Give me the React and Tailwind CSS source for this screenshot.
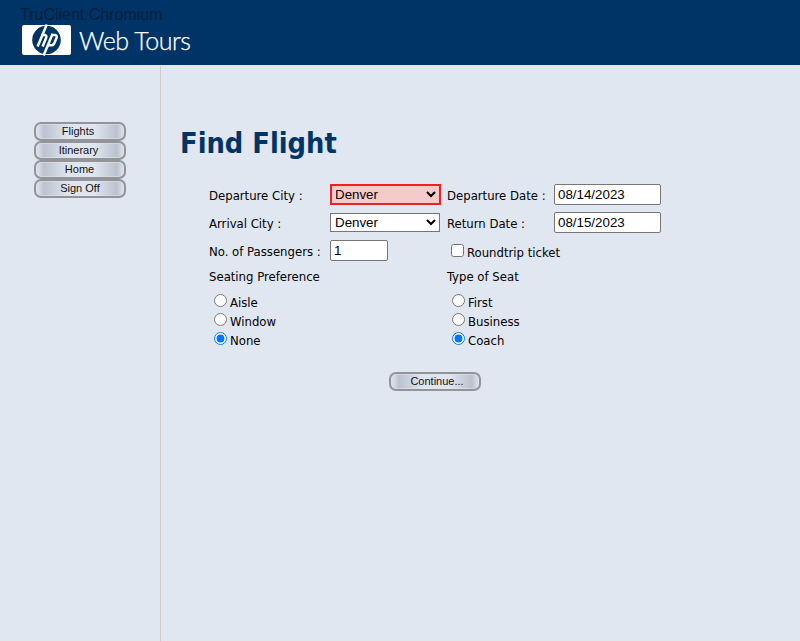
import React from "react";

const labelFont = "font-['DejaVu_Sans_Condensed','DejaVu_Sans',sans-serif] [font-stretch:condensed] text-[13px] leading-[18px] text-black whitespace-nowrap";
const fieldFont = "font-['Liberation_Sans',sans-serif] text-[13.333px] text-black";

function PillButton({ children, shift = "" }) {
  return (
    <button
      type="button"
      className="block h-[19px] w-[92px] rounded-[7px] border-2 border-[#929497] bg-[linear-gradient(90deg,#dce1ea_0%,#d3d8e2_4%,#bcc2cd_9%,#dfe5ef_36%,#e0e6f0_66%,#bcc2cd_92%,#d3d8e2_97%,#dce1ea_100%)] p-0 text-center font-['Liberation_Sans',sans-serif] text-[11px] leading-[15px] text-[#111] shadow-[inset_0_0_0_1px_rgba(224,231,241,0.5)]"
    >
      <span className={shift}>{children}</span>
    </button>
  );
}

function Radio({ name, label, checked }) {
  return (
    <label className={`flex h-[19px] items-start ${labelFont}`}>
      <input type="radio" name={name} defaultChecked={checked} className="m-0 mr-[3px] h-[13px] w-[13px] shrink-0" />
      <span>{label}</span>
    </label>
  );
}

function Logo() {
  return (
    <svg width="180" height="34" viewBox="0 0 180 34" className="block">
      <rect x="2" y="2" width="49" height="30" rx="2" fill="#fff" />
      <circle cx="26.5" cy="17" r="14.3" fill="#003366" />
      <g fill="none" stroke="#fff" strokeWidth="2.5">
        <path d="M26.8 1.5 L17.6 23.5" />
        <path d="M21.2 12.1 H24 Q27.2 12.1 26.2 14.7 L22.6 23.5" />
        <path d="M32.6 10.8 L23.6 32.5" />
        <path d="M31.2 12.1 H34.4 Q37.6 12.1 36.6 14.7 L34.3 20.2 Q33.4 22.3 31 22.3 H28" />
      </g>
      <text x="59" y="27" textLength="112" fill="#fff" stroke="#fff" strokeWidth="0.25" fontSize="25" fontWeight="300" className="font-['Lato',sans-serif]">
        Web Tours
      </text>
    </svg>
  );
}

export default function App() {
  return (
    <div className="flex h-[641px] w-[800px] flex-col overflow-hidden bg-[#e0e7f1]">
      <header className="relative h-[65px] shrink-0 bg-[#003366] pl-5 pt-[23px]">
        <Logo />
        <span className="absolute left-5 top-[5px] whitespace-nowrap font-['Liberation_Sans',sans-serif] text-[16px] leading-[19px] text-[#00203f]">
          TruClient Chromium
        </span>
      </header>
      <div className="flex min-h-0 flex-1 pt-px">
        <nav className="w-[161px] shrink-0 border-r border-[#cccccc] pl-[34px] pt-[56px]">
          <PillButton shift="-ml-1">Flights</PillButton>
          <PillButton shift="-ml-[3px]">Itinerary</PillButton>
          <PillButton shift="-ml-px">Home</PillButton>
          <PillButton>Sign Off</PillButton>
        </nav>
        <main className="flex-1 pl-[19px] pt-[57px]">
          <h1 className="h-[61px] whitespace-nowrap font-['DejaVu_Sans_Condensed','DejaVu_Sans',sans-serif] text-[28.7px] font-bold leading-[40px] text-[#003366] [font-stretch:condensed]">
            Find Flight
          </h1>
          <form className="pl-[29px]">
            <div className="grid grid-cols-[121px_117px_107px_107px] grid-rows-[28px_28px_28px]">
              <span className={`pt-[3px] ${labelFont}`}>Departure City :</span>
              <div>
                <select className={`block h-[21px] w-[111px] border-2 border-[#ee2225] bg-[#f5caca] pl-0 ${fieldFont} -indent-px`}>
                  <option>Denver</option>
                </select>
              </div>
              <span className={`pt-[3px] ${labelFont}`}>Departure Date :</span>
              <input className={`h-[21px] w-[107px] rounded-[2px] border border-[#767676] bg-white px-[3px] ${fieldFont}`} defaultValue="08/14/2023" />

              <span className={`pt-[3px] ${labelFont}`}>Arrival City :</span>
              <select className={`mt-px block h-[19px] w-[110px] border border-[#767676] bg-white ${fieldFont}`}>
                <option>Denver</option>
              </select>
              <span className={`pt-[3px] ${labelFont}`}>Return Date :</span>
              <input className={`h-[21px] w-[107px] rounded-[2px] border border-[#767676] bg-white px-[3px] ${fieldFont}`} defaultValue="08/15/2023" />

              <span className={`pt-[3px] ${labelFont}`}>No. of Passengers :</span>
              <input className={`h-[21px] w-[58px] rounded-[2px] border border-[#767676] bg-white px-[3px] ${fieldFont}`} defaultValue="1" />
              <label className={`flex items-start pl-1 pt-1 ${labelFont}`}>
                <input type="checkbox" className="m-0 mr-[3px] h-[13px] w-[13px] shrink-0" />
                <span>Roundtrip ticket</span>
              </label>
            </div>
            <div className="grid grid-cols-[238px_214px]">
              <fieldset>
                <div className={`h-[26px] ${labelFont}`}>Seating Preference</div>
                <div className="pl-[5px]">
                  <Radio name="pref" label="Aisle" />
                  <Radio name="pref" label="Window" />
                  <Radio name="pref" label="None" checked />
                </div>
              </fieldset>
              <fieldset>
                <div className={`h-[26px] ${labelFont}`}>Type of Seat</div>
                <div className="pl-[5px]">
                  <Radio name="type" label="First" />
                  <Radio name="type" label="Business" />
                  <Radio name="type" label="Coach" checked />
                </div>
              </fieldset>
            </div>
            <div className="flex w-[452px] justify-center pt-[21px]">
              <PillButton shift="ml-1">Continue...</PillButton>
            </div>
          </form>
        </main>
      </div>
    </div>
  );
}
